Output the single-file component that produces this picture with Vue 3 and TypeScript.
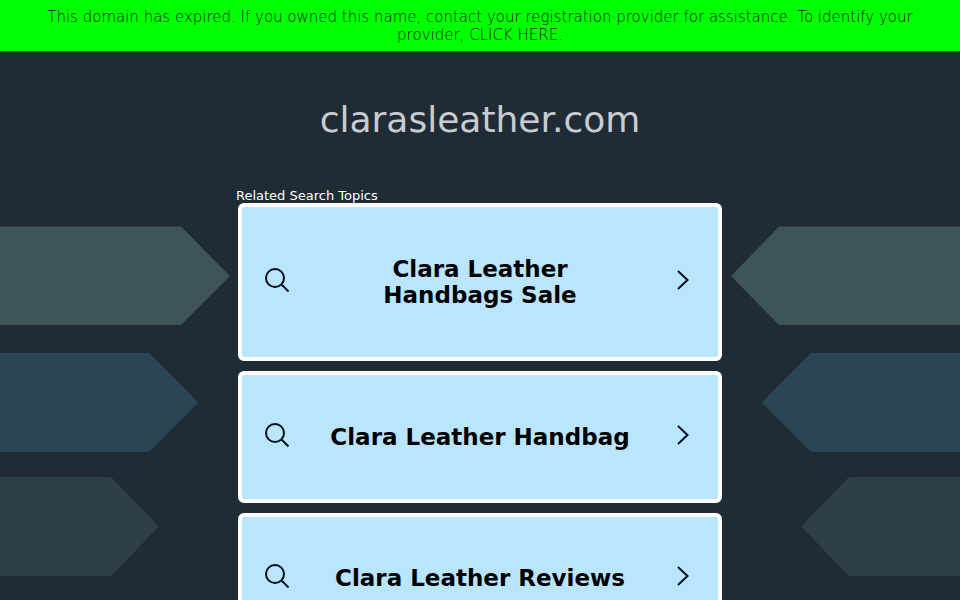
<script setup lang="ts">
const topics: { label: string; size: string }[] = [
  { label: 'Clara Leather Handbags Sale', size: 'tall' },
  { label: 'Clara Leather Handbag', size: 'mid' },
  { label: 'Clara Leather Reviews', size: 'low' },
]
const shapes = [
  { points: '0,226.5 181,226.5 230,276 181,325 0,325', fill: '#3e5558' },
  { points: '0,353 149,353 198,402.5 149,452 0,452', fill: '#2a4655' },
  { points: '0,477 111,477 159,526.5 111,576 0,576', fill: '#2d3f47' },
  { points: '960,226.5 779,226.5 731,276 779,325 960,325', fill: '#3e5558' },
  { points: '960,353 811,353 762,402.5 811,452 960,452', fill: '#2a4655' },
  { points: '960,477 849,477 801,526.5 849,576 960,576', fill: '#2d3f47' },
]
</script>

<template>
  <div class="page">
    <svg class="art" width="960" height="600" viewBox="0 0 960 600" aria-hidden="true">
      <polygon v-for="s in shapes" :key="s.points" :points="s.points" :fill="s.fill" />
    </svg>
    <div class="banner">
      This domain has expired. If you owned this name, contact your registration provider for assistance. To identify your provider, CLICK HERE.
    </div>
    <main class="content">
      <h1 class="domain">clarasleather.com</h1>
      <div class="column">
        <div class="heading">Related Search Topics</div>
        <a v-for="t in topics" :key="t.label" class="card" :class="t.size" href="#">
          <svg class="icon" width="26" height="26" viewBox="0 0 26 26" fill="none" stroke="#020f1e" stroke-width="2">
            <circle cx="11" cy="11" r="9" />
            <path d="M17.5 17.5 L24.5 24.5" />
          </svg>
          <span class="label">{{ t.label }}</span>
          <svg class="icon" width="14" height="20" viewBox="0 0 14 20" fill="none" stroke="#020f1e" stroke-width="2">
            <path d="M2 1 L11.5 10 L2 19" />
          </svg>
        </a>
      </div>
    </main>
  </div>
</template>

<style>
html, body { margin: 0; background: #1f2b35; }
</style>

<style scoped>
.page {
  position: relative;
  width: 960px;
  height: 600px;
  overflow: hidden;
  background: #1f2b35;
  font-family: "DejaVu Sans", sans-serif;
}
.art { position: absolute; left: 0; top: 0; }
.banner {
  position: relative;
  box-sizing: border-box;
  height: 51px;
  padding: 8px 20px 0;
  background: #00ff00;
  color: #002200;
  font-size: 15px;
  font-weight: 200;
  line-height: 18px;
  text-align: center;
}
.content {
  position: relative;
  display: flex;
  flex-direction: column;
  align-items: center;
}
.domain {
  margin: 48px 0 0;
  color: #c8ccd1;
  font-size: 36px;
  font-weight: 400;
  line-height: 42px;
}
.column {
  display: flex;
  flex-direction: column;
  width: 484px;
  margin-top: 46px;
  gap: 10px;
}
.heading {
  height: 16px;
  margin: 1px 0 -11px -2px;
  color: #fff;
  font-size: 13px;
  line-height: 16px;
  white-space: nowrap;
}
.card {
  box-sizing: border-box;
  display: flex;
  align-items: center;
  justify-content: space-between;
  flex: none;
  padding: 0 28px 4px 22px;
  border: 4px solid #fff;
  border-radius: 6px;
  background: #b9e5fe;
  color: #000;
  text-decoration: none;
}
.card.tall { height: 158px; }
.card.mid { height: 132px; }
.card.low { height: 130px; }
.label {
  width: 306px;
  margin-right: 6px;
  padding-top: 4px;
  font-size: 23px;
  font-weight: 700;
  line-height: 26px;
  text-align: center;
}
.icon { flex: none; }
</style>
